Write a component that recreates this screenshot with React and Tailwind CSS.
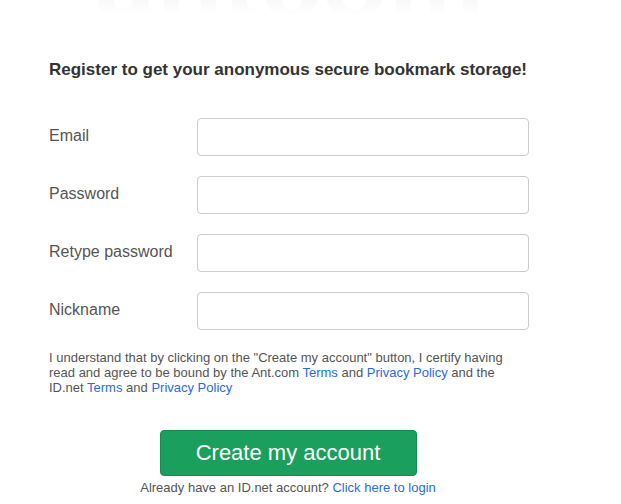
export default function App() {
  const fields = ["Email", "Password", "Retype password", "Nickname"];
  return (
    <div className="w-[621px] h-[504px] bg-white overflow-hidden relative" style={{ fontFamily: '"Liberation Sans", Arial, sans-serif' }}>
      <div className="h-[18px] overflow-hidden flex justify-center pr-[40px]">
        <div className="text-[108px] font-bold leading-none -mt-[72px] tracking-[1px] bg-gradient-to-b from-[#f3f3f3] from-[68%] to-white to-[96%] bg-clip-text text-transparent select-none">
          antcom
        </div>
      </div>
      <div className="w-[480px] ml-[49px]">
        <h1 className="mt-[42px] text-[17px] font-bold text-[#333] leading-[20px]">
          Register to get your anonymous secure bookmark storage!
        </h1>
        <div className="mt-[38px] flex flex-col gap-[20px]">
          {fields.map((f) => (
            <div key={f} className="flex items-center h-[38px]">
              <label className="w-[148px] text-[16px] text-[#555] -mt-[2px]">{f}</label>
              <input type={f.toLowerCase().includes("password") ? "password" : "text"} className="w-[332px] h-[38px] border border-[#ccc] rounded-[4px] bg-white outline-none" />
            </div>
          ))}
        </div>
        <p className="mt-[20px] text-[13px] leading-[15px] text-[#555] whitespace-nowrap">
          I understand that by clicking on the "Create my account" button, I certify having
          <br />
          read and agree to be bound by the Ant.com <a className="text-[#2a6be2]">Terms</a> and{" "}
          <a className="text-[#2a6be2]">Privacy Policy</a> and the
          <br />
          ID.net <a className="text-[#2a6be2]">Terms</a> and <a className="text-[#2a6be2]">Privacy Policy</a>
        </p>
        <div className="flex flex-col items-center mt-[35px] -ml-[2px]">
          <button className="w-[257px] h-[46px] bg-[#1b9f5c] border border-[#178a50] rounded-[4px] text-white text-[22px] leading-none">
            Create my account
          </button>
          <div className="mt-[4px] text-[13px] leading-[15px] text-[#555]">
            Already have an ID.net account? <a className="text-[#2a6be2]">Click here to login</a>
          </div>
        </div>
      </div>
    </div>
  );
}
